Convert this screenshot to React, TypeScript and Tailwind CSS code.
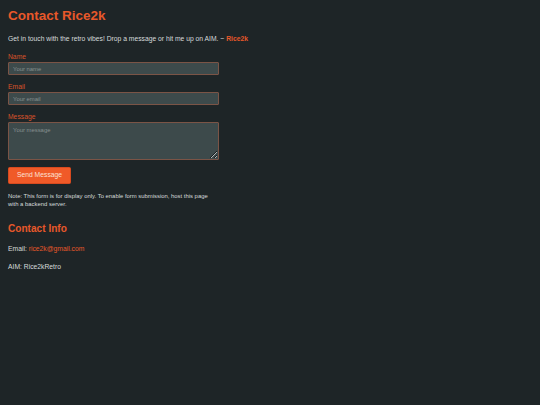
export default function App() {
  return (
    <div className="min-h-screen bg-[#1e2527] px-[8px] pt-[8px] pb-[20px] font-['Liberation_Sans',Arial,sans-serif] text-[#d6dbdb]">
      <h1 className="text-[13.5px] font-bold leading-[16px] text-[#e8582a]">
        Contact Rice2k
      </h1>
      <p className="mt-[9.5px] text-[6.75px] leading-[9px]">
        Get in touch with the retro vibes! Drop a message or hit me up on AIM. ~{" "}
        <span className="font-bold text-[#e8582a]">Rice2k</span>
      </p>

      {/* Form */}
      <form className="mt-[9px] flex max-w-[211px] flex-col" onSubmit={(e) => e.preventDefault()}>
        <label className="text-[6.75px] leading-[9px] text-[#d8532a]">Name</label>
        <input
          type="text"
          placeholder="Your name"
          className="mt-[1.5px] h-[13px] w-full rounded-[1px] border border-[#7b5446] bg-[#3d4a4b] px-[4px] text-[5.9px] text-[#d6dbdb] placeholder:text-[#86908f] outline-none"
        />

        <label className="mt-[6.5px] text-[6.75px] leading-[9px] text-[#d8532a]">Email</label>
        <input
          type="email"
          placeholder="Your email"
          className="mt-[1.5px] h-[13px] w-full rounded-[1px] border border-[#7b5446] bg-[#3d4a4b] px-[4px] text-[5.9px] text-[#d6dbdb] placeholder:text-[#86908f] outline-none"
        />

        <label className="mt-[6.5px] text-[6.75px] leading-[9px] text-[#d8532a]">Message</label>
        <textarea
          placeholder="Your message"
          className="mt-[1.5px] h-[38px] w-full rounded-[1px] border border-[#7b5446] bg-[#3d4a4b] px-[4px] py-[3px] text-[5.9px] leading-[8px] text-[#d6dbdb] placeholder:text-[#86908f] outline-none"
        />

        <button
          type="submit"
          className="mt-[7px] h-[17px] w-[63px] rounded-[1.5px] border border-[#d84a1f] bg-[#f05a28] text-[6.75px] text-[#fde0d5]"
        >
          Send Message
        </button>
      </form>

      <p className="mt-[7.75px] max-w-[211px] text-[5.9px] leading-[8.5px]">
        Note: This form is for display only. To enable form submission, host this page with a backend server.
      </p>

      {/* Contact info */}
      <h2 className="mt-[13.75px] text-[10.1px] font-bold leading-[12px] text-[#e8582a]">
        Contact Info
      </h2>
      <p className="mt-[9.5px] text-[6.75px] leading-[9px]">
        Email: <a href="#" className="text-[#e8582a]">rice2k@gmail.com</a>
      </p>
      <p className="mt-[8.5px] text-[6.75px] leading-[9px]">AIM: Rice2kRetro</p>
    </div>
  );
}
